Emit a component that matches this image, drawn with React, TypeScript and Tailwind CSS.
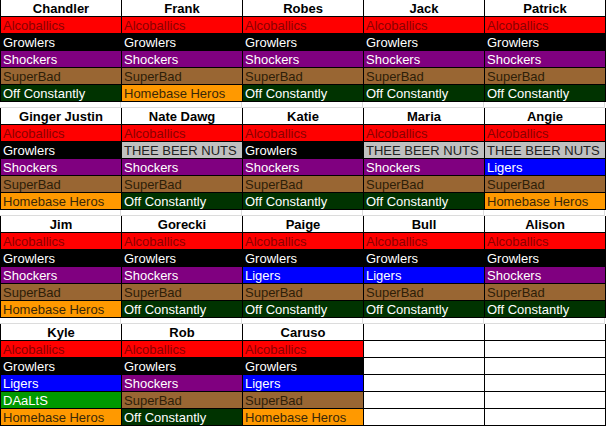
const teams: Record<string, string> = {
  Alcoballics: 'bg-[#ff0000] text-[#8b0000]',
  Growlers: 'bg-black text-white',
  Shockers: 'bg-[#800080] text-white',
  SuperBad: 'bg-[#996633] text-[#2e1e08]',
  'Off Constantly': 'bg-[#003300] text-white',
  'Homebase Heros': 'bg-[#ff9900] text-[#3a2808]',
  'THEE BEER NUTS': 'bg-[#c0c0c0] text-[#222222]',
  Ligers: 'bg-[#0000ff] text-white',
  DAaLtS: 'bg-[#009900] text-white',
};

type Person = { name: string; picks: string[] };

const A = 'Alcoballics';
const G = 'Growlers';
const S = 'Shockers';
const SB = 'SuperBad';
const OC = 'Off Constantly';
const HH = 'Homebase Heros';
const TB = 'THEE BEER NUTS';
const L = 'Ligers';

const groups: Person[][] = [
  [
    { name: 'Chandler', picks: [A, G, S, SB, OC] },
    { name: 'Frank', picks: [A, G, S, SB, HH] },
    { name: 'Robes', picks: [A, G, S, SB, OC] },
    { name: 'Jack', picks: [A, G, S, SB, OC] },
    { name: 'Patrick', picks: [A, G, S, SB, OC] },
  ],
  [
    { name: 'Ginger Justin', picks: [A, G, S, SB, HH] },
    { name: 'Nate Dawg', picks: [A, TB, S, SB, OC] },
    { name: 'Katie', picks: [A, G, S, SB, OC] },
    { name: 'Maria', picks: [A, TB, S, SB, OC] },
    { name: 'Angie', picks: [A, TB, L, SB, HH] },
  ],
  [
    { name: 'Jim', picks: [A, G, S, SB, HH] },
    { name: 'Gorecki', picks: [A, G, S, SB, OC] },
    { name: 'Paige', picks: [A, G, L, SB, OC] },
    { name: 'Bull', picks: [A, G, L, SB, OC] },
    { name: 'Alison', picks: [A, G, S, SB, OC] },
  ],
  [
    { name: 'Kyle', picks: [A, G, L, 'DAaLtS', HH] },
    { name: 'Rob', picks: [A, G, S, SB, OC] },
    { name: 'Caruso', picks: [A, G, L, SB, HH] },
    { name: '', picks: ['', '', '', '', ''] },
    { name: '', picks: ['', '', '', '', ''] },
  ],
];

function Group({ people, last }: { people: Person[]; last: boolean }) {
  return (
    <div>
      <div className="flex border-l border-black">
        {people.map((p, i) => (
          <div key={i} className="w-[121px] h-[17px] border-r border-b border-black bg-white text-center font-bold text-[13px] leading-[18px] text-black whitespace-nowrap">
            {p.name}
          </div>
        ))}
      </div>
      {[0, 1, 2, 3, 4].map((r) => (
        <div key={r} className="flex border-l border-black">
          {people.map((p, i) => {
            const t = p.picks[r];
            return (
              <div
                key={i}
                className={`w-[121px] h-[17px] border-r border-b border-black pl-[2px] text-[13px] leading-[18px] whitespace-nowrap ${t ? teams[t] : 'bg-white'}`}
              >
                {t}
              </div>
            );
          })}
        </div>
      ))}
      {!last && (
        <div className="flex">
          {people.map((_, i) => (
            <div key={i} className="w-[121px] h-[6px] border-r border-b border-[#dcdcdc] bg-white" />
          ))}
        </div>
      )}
    </div>
  );
}

export default function App() {
  return (
    <div className="w-[606px] h-[427px] bg-white overflow-hidden" style={{ fontFamily: '"Liberation Sans", Arial, sans-serif' }}>
      {groups.map((g, i) => (
        <Group key={i} people={g} last={i === groups.length - 1} />
      ))}
    </div>
  );
}
